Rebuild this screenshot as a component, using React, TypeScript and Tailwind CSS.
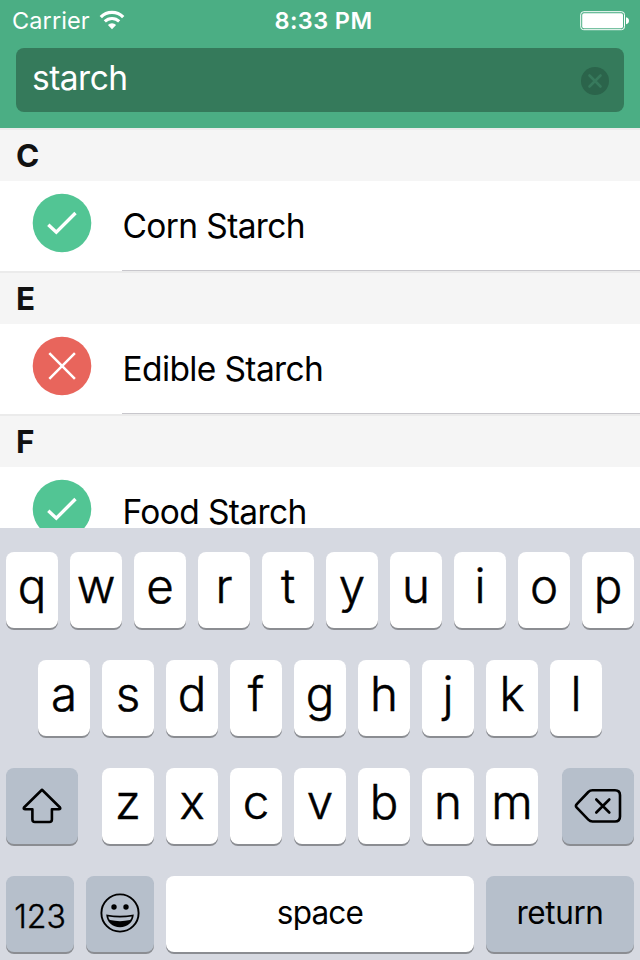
import clsx from "clsx";
import type { ReactNode } from "react";

type Status = "ok" | "bad";

interface Ingredient {
  name: string;
  status: Status;
}

const sections: { letter: string; items: Ingredient[] }[] = [
  { letter: "C", items: [{ name: "Corn Starch", status: "ok" }] },
  { letter: "E", items: [{ name: "Edible Starch", status: "bad" }] },
  { letter: "F", items: [{ name: "Food Starch", status: "ok" }] },
];

function StatusBar() {
  return (
    <div className="grid h-[41px] grid-cols-3 items-center pl-3 pr-[10px] text-white">
      <div className="flex items-center gap-[9px]">
        <span className="text-[23.5px] leading-none tracking-[0.1px]">Carrier</span>
        <svg className="mb-[2px]" width="26" height="20" viewBox="0 0 26 20" fill="none">
          <path d="M1.8 7.1a15.8 15.8 0 0 1 22.4 0" stroke="white" strokeWidth="3.3" />
          <path d="M5.8 11.4a10.2 10.2 0 0 1 14.4 0" stroke="white" strokeWidth="3" />
          <path d="M13 19.2 8.9 15a5.8 5.8 0 0 1 8.2 0z" fill="white" />
        </svg>
      </div>
      <span className="whitespace-nowrap pl-[5px] text-center text-[23.5px] font-semibold leading-none tracking-[0.4px]">
        8:33 PM
      </span>
      <svg className="justify-self-end" width="50" height="20" viewBox="0 0 50 20">
        <rect x="0.7" y="0.7" width="43.8" height="18" rx="3" fill="none" stroke="white" />
        <rect x="2.2" y="2.2" width="40.8" height="15" rx="1.8" fill="white" />
        <path d="M46 6.2c2 .3 3 1.800 3 3.500s-1 3.200-3 3.500z" fill="white" />
      </svg>
    </div>
  );
}

function SearchField() {
  return (
    <div className="mx-4 mt-[7px] flex h-16 items-center justify-between rounded-lg bg-[#357a5b] pl-4 pr-[15px]">
      <span className="pb-[3px] text-[33.5px] leading-none tracking-[-0.5px] text-white">starch</span>
      <svg className="mt-[2px]" width="28" height="28" viewBox="0 0 28 28">
        <circle cx="14" cy="14" r="14" fill="#2b644b" />
        <path d="M8.500 8.500l11 11M19.500 8.500l-11 11" stroke="#37795c" strokeWidth="2.600" strokeLinecap="round" />
      </svg>
    </div>
  );
}

function StatusIcon({ status }: { status: Status }) {
  return (
    <svg className="mb-[6px]" width="60" height="60" viewBox="0 0 60 60" fill="none">
      <circle cx="30" cy="30" r="29.3" fill={status === "ok" ? "#52c594" : "#e8655c"} />
      {status === "ok" ? (
        <path d="M16.300 31.800 24.300 39.200 43.500 20" stroke="white" strokeWidth="3.400" />
      ) : (
        <path d="M17.300 17.200l25.600 25.600M42.900 17.200 17.300 42.800" stroke="white" strokeWidth="2.500" />
      )}
    </svg>
  );
}

function IngredientRow({ item }: { item: Ingredient }) {
  return (
    <li className="flex h-[90px] items-center bg-white pl-8">
      <StatusIcon status={item.status} />
      <div className="ml-[30px] flex h-full flex-1 items-center border-b border-[#c8c7cc] pt-[3px]">
        <span className="whitespace-nowrap pl-[0.5px] text-[33.5px] leading-none tracking-[-0.62px] text-black">
          {item.name}
        </span>
      </div>
    </li>
  );
}

function Key({ children, className, dark }: { children: ReactNode; className?: string; dark?: boolean }) {
  return (
    <button
      className={clsx(
        "flex h-[76px] items-center justify-center rounded-lg leading-none text-black shadow-[0_2px_0_#8b8d92]",
        dark ? "bg-[#b6bfcb]" : "bg-white",
        className
      )}
    >
      {children}
    </button>
  );
}

function LetterKeys({ letters }: { letters: string }) {
  return (
    <div className="flex justify-center gap-3">
      {letters.split("").map((letter) => (
        <Key key={letter} className="w-[52px] pb-2 text-[47.5px] font-light [-webkit-text-stroke:0.5px_black]">
          {letter}
        </Key>
      ))}
    </div>
  );
}

function Keyboard() {
  return (
    <div className="flex h-[432px] shrink-0 flex-col gap-8 bg-[#d6d9e1] px-[6px] pt-6">
      <LetterKeys letters="qwertyuiop" />
      <LetterKeys letters="asdfghjkl" />
      <div className="flex justify-between">
        <Key dark className="w-[72px]">
          <svg width="40" height="36" viewBox="0 0 40 36" fill="none">
            <path
              d="M20 1.800 38 19.500q.8 1.800-1.200 1.800H29.900V31.500q0 2.500-2.500 2.500H12.900q-2.500 0-2.500-2.500V21.300H3.200q-2 0-1.200-1.800z"
              stroke="black"
              strokeWidth="2.600"
              strokeLinejoin="round"
            />
          </svg>
        </Key>
        <LetterKeys letters="zxcvbnm" />
        <Key dark className="w-[72px]">
          <svg width="48" height="36" viewBox="0 0 48 36" fill="none" stroke="black" strokeWidth="2.600">
            <path
              d="M18.500 2.200H41q5 0 5 5V28.500q0 5-5 5H18.500q-2.400 0-4.200-1.800L2.800 19.700q-1.700-1.800 0-3.600L14.300 4q1.800-1.800 4.200-1.800z"
              strokeLinejoin="round"
            />
            <path d="M22.300 11.500l13 13M35.300 11.500l-13 13" strokeLinecap="round" />
          </svg>
        </Key>
      </div>
      <div className="flex gap-3 text-[31.5px]">
        <Key dark className="w-[68px] pt-[5px]">
          <span className="text-[32px] font-light [-webkit-text-stroke:0.4px_black]">123</span>
        </Key>
        <Key dark className="w-[68px]">
          <svg className="mb-[2px]" width="40" height="40" viewBox="0 0 40 40">
            <circle cx="20" cy="20" r="18.600" fill="none" stroke="black" strokeWidth="1.900" />
            <circle cx="14" cy="14" r="2.700" />
            <circle cx="26" cy="14" r="2.700" />
            <path d="M6.200 21.500q13.800 2.600 27.600 0C33.200 29.500 27.500 34.200 20 34.200S6.800 29.500 6.200 21.500z" />
            <path d="M8.200 23.400q11.800 2 23.600 0-.4 2.300-1.800 3.600-10 2.300-20 0-1.400-1.300-1.800-3.600z" fill="#b6bfcb" />
          </svg>
        </Key>
        <Key className="w-[308px] pb-[2px]">
          <span className="tracking-[-0.8px]">space</span>
        </Key>
        <Key dark className="w-[148px] pb-[2px]">
          <span className="tracking-[-0.4px]">return</span>
        </Key>
      </div>
    </div>
  );
}

export default function App() {
  return (
    <div className="flex h-[960px] w-[640px] flex-col overflow-hidden bg-white font-['Inter','Liberation_Sans',sans-serif]">
      <header className="h-32 shrink-0 bg-[#4bae84]">
        <StatusBar />
        <SearchField />
      </header>
      <main className="h-[400px] shrink-0 overflow-hidden">
        {sections.map((section) => (
          <section key={section.letter}>
            <h2 className="flex h-[53px] items-center border-t-2 border-[#ebebeb] bg-[#f5f5f5] pl-4 text-[31.5px] font-bold leading-none text-[#111]">
              {section.letter}
            </h2>
            <ul>
              {section.items.map((item) => (
                <IngredientRow key={item.name} item={item} />
              ))}
            </ul>
          </section>
        ))}
      </main>
      <Keyboard />
    </div>
  );
}
